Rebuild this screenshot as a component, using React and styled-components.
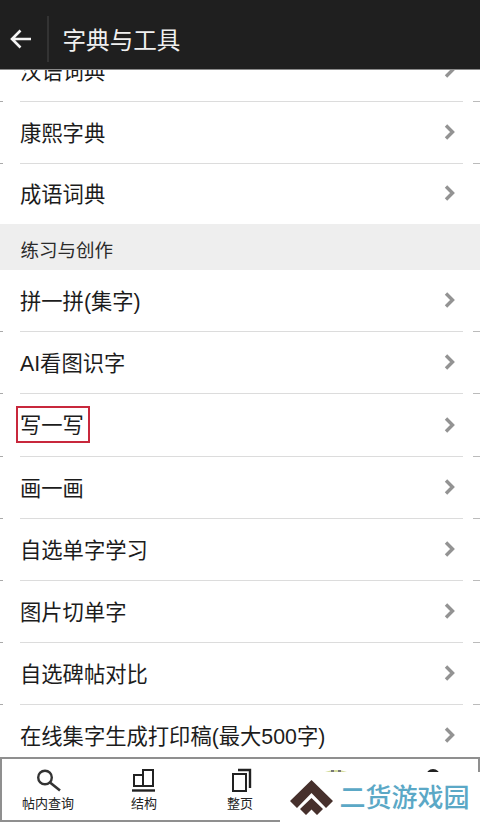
import React from 'react';
import styled, { createGlobalStyle } from 'styled-components';

const Global = createGlobalStyle`
  html, body { margin: 0; padding: 0; background: #fff; }
  * { box-sizing: border-box; }
`;
const FONT = `"Liberation Sans", "Noto Sans CJK SC", sans-serif`;

const Page = styled.div`
  position: relative; width: 480px; height: 823px; overflow: hidden;
  display: flex; flex-direction: column; background: #fff; font-family: ${FONT};
`;
const Header = styled.header`
  flex: 0 0 70px; display: flex; align-items: center; background: #1f1f1f;
  padding-top: 8px; border-bottom: 1px solid #8a8a8a; position: relative; z-index: 1;
`;
const BackBtn = styled.div`
  width: 49px; height: 46px; display: flex; align-items: center; justify-content: center;
  padding-right: 5px; border-right: 2px solid #333; color: #f4f4f4;
`;
const Title = styled.h1`
  margin: 0 0 0 13.5px; font-size: 23.6px; font-weight: 400; color: #f0f0f0; letter-spacing: 0;
`;
const List = styled.div`
  flex: 1; overflow: hidden; display: flex; flex-direction: column;
`;
const Row = styled.div`
  flex: 0 0 ${p => p.$h || 62}px; margin-top: ${p => p.$mt || 0}px;
  display: flex; align-items: center; justify-content: space-between;
  padding: 0 23px 4px 20px; position: relative;
  font-size: 21.3px; color: #1c1c1c;
  &::after {
    content: ""; position: absolute; left: 0; right: 0; bottom: 0; height: 1px;
    background: ${p => p.$noline ? 'transparent' : 'linear-gradient(to right, #aaa 0 3px, transparent 3px 20px, #dcdcdc 20px 463px, transparent 463px 473px, #bbb 473px)'};
  }
`;
const Marked = styled.span`
  position: relative;
  &::before { content: ""; position: absolute; left: -4px; right: -6px; top: -2px; bottom: -4px; border: 2px solid #c8283c; }
`;
const Section = styled.div`
  flex: 0 0 46px; background: #eeeeee; display: flex; align-items: center;
  padding: 3px 0 0 20.5px; font-size: 18.5px; color: #2a2a2a;
`;
const Bottom = styled.nav`
  flex: 0 0 65px; margin-bottom: 1px; display: grid; grid-template-columns: repeat(5, 96px);
  background: #fff; box-shadow: inset 0 0 0 2px #8f8f8f;
`;
const Tab = styled.div`
  display: flex; flex-direction: column; align-items: center; justify-content: flex-start;
  padding-top: 9px; font-size: 13px; line-height: 19px; color: #222;
`;
const Mark = styled.div`
  position: absolute; right: 0; bottom: 0; width: 200px; height: 51px; background: #fff;
  display: flex; align-items: center; gap: 6.5px; padding-left: 10px;
`;
const MarkText = styled.span`
  font-size: 26px; font-weight: 500; color: #5ba8c6; line-height: 30px;
`;
const ChevronIcon = styled.svg`
  margin-top: 2px; flex: none;
`;

const Chevron = () => (
  <ChevronIcon width="14" height="20" viewBox="0 0 14 20"><path d="M3 3.500l6.500 6.500-6.500 6.500" fill="none" stroke="#939393" strokeWidth="3.4" /></ChevronIcon>
);
const Item = ({ children, ...p }) => <Row {...p}>{children}<Chevron /></Row>;

export default function App() {
  return (
    <Page>
      <Global />
      <Header>
        <BackBtn>
          <svg width="24" height="24" viewBox="0 0 24 24" fill="none" stroke="#f4f4f4" strokeWidth="2.6">
            <path d="M22 12H3M11.500 3.500L3 12l8.500 8.500" />
          </svg>
        </BackBtn>
        <Title>字典与工具</Title>
      </Header>
      <List>
        <Item $mt={-30}>汉语词典</Item>
        <Item>康熙字典</Item>
        <Item $noline $h={60}>成语词典</Item>
        <Section>练习与创作</Section>
        <Item>拼一拼(集字)</Item>
        <Item>AI看图识字</Item>
        <Item $h={63}><Marked>写一写</Marked></Item>
        <Item>画一画</Item>
        <Item>自选单字学习</Item>
        <Item>图片切单字</Item>
        <Item>自选碑帖对比</Item>
        <Item $noline>在线集字生成打印稿(最大500字)</Item>
      </List>
      <Bottom>
        <Tab>
          <svg width="30" height="28" viewBox="0 0 30 28" fill="none" stroke="#333">
            <circle cx="12" cy="11.500" r="6.800" strokeWidth="2.400" />
            <path d="M17 16.500l10 8" strokeWidth="2.600" />
          </svg>
          帖内查询
        </Tab>
        <Tab>
          <svg width="30" height="28" viewBox="0 0 30 28" fill="none" stroke="#222" strokeWidth="2">
            <path d="M14 9H5v11h9V4h10v16H14" />
            <path d="M3 24.500h23" strokeWidth="2.400" />
          </svg>
          结构
        </Tab>
        <Tab>
          <svg width="30" height="28" viewBox="0 0 30 28" fill="none" stroke="#222" strokeWidth="2">
            <path d="M8 8h13v17H8z" />
            <path d="M13 4h12v18" strokeWidth="2.400" />
          </svg>
          整页
        </Tab>
        <Tab>
          <svg width="30" height="28" viewBox="0 0 30 28">
            <path d="M4 6q11-4 22 0v10H4z" fill="#d4dc9a" />
            <path d="M10 4h3v2h-3zM17 4h3v2h-3z" fill="#777" />
          </svg>
        </Tab>
        <Tab>
          <svg width="30" height="28" viewBox="0 0 30 28" fill="none">
            <circle cx="16" cy="10" r="5.500" stroke="#222" strokeWidth="3" />
          </svg>
        </Tab>
      </Bottom>
      <Mark>
        <svg width="43" height="36" viewBox="0 0 43 36" fill="#46302c">
          <path d="M21.500 0L43 21l-7 7-14.500-15L7 28l-7-7z" />
          <path d="M21.500 18L33 29l-6 6-5.500-5.500L16 35l-6-6z" />
        </svg>
        <MarkText>二货游戏园</MarkText>
      </Mark>
    </Page>
  );
}
